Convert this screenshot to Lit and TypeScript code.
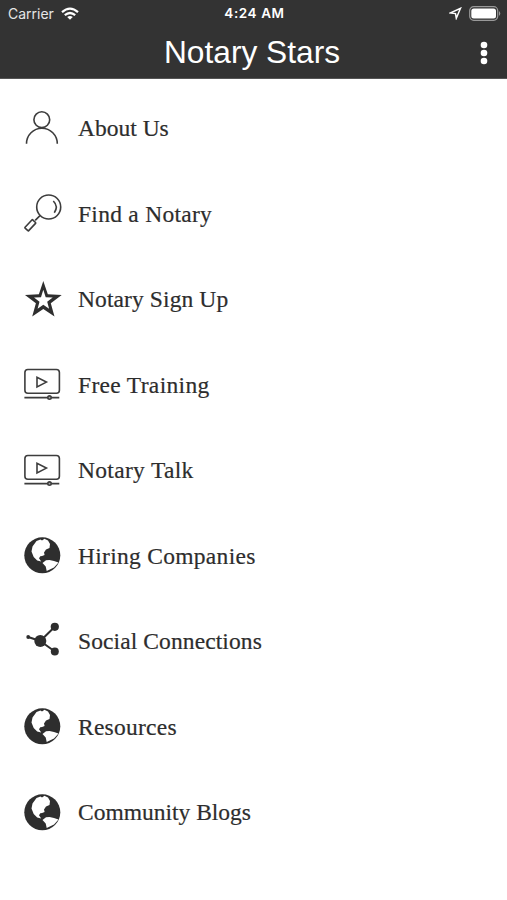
import { LitElement, html, svg, css } from "lit";
import { customElement } from "lit/decorators.js";
import { styleMap } from "lit/directives/style-map.js";

const person = { y: -2.5, art: svg`<g class="line"><circle cx="26.8" cy="19.2" r="7.9"/><path d="M11.5 43.3a15.4 15.6 0 0 1 30.8 0"/></g>` };
const search = { y: -2, art: svg`<g class="line"><circle cx="33.7" cy="22" r="12"/><path d="M38.3 16q5.4 5.4 1 11.7M25 30.6l-4.8 4.8"/><rect x="-5.6" y="-2.5" width="11.2" height="5" rx=".6" transform="translate(15.3 40.3) rotate(-47)"/></g>` };
const star = { y: -1.5, art: svg`<path class="solid" fill-rule="evenodd" d="M28.3 10.5l4.5 13.3 13.9.6-10.900 8.400 3.700 13.300-11.200-7.500-11.100 7.500 3.700-13.300-10.900-8.400 13.900-.6zM28.300 19.300l-2.300 7.400-7 .3 5.500 4.300-1.900 6.900 5.700-3.900 5.800 3.900-1.900-6.900 5.500-4.300-7-.3z"/>` };
const video = { y: -1, art: svg`<g class="line"><rect x="9.9" y="14.5" width="34.5" height="23.8" rx="3"/><path d="M22 22.3v9.600l9.400-4.800zM9.400 42.600h34.900"/><circle class="knob" cx="34.5" cy="42.6" r="1.7"/></g>` };
const globe = { y: 0, art: svg`<circle class="solid" cx="27.3" cy="30.3" r="18"/><path class="land" d="M16.500 26.500l1-5 4-5.500 4-1.500 1.500 1 2.500-1.800 3.500 1.800 2 3.500-.5 4-3.500 1.500-2 3 .6 2.500-2.500 1-1.800.3-1.300 2 2.200 3.200-4-1-3.500-3.500zM27.500 38l3.500-2.800 3.500-.2 4.500 1 4.500 1.600-4.500 5-7.300 3.400-1-4.400z"/>` };
const share = { y: 0.5, art: svg`<g class="solid"><circle cx="25.3" cy="30.5" r="6"/><circle cx="39.8" cy="16.3" r="4.1"/><circle cx="39.8" cy="41" r="4"/><circle cx="13.2" cy="26.5" r="1.9"/></g><path class="bond" d="M13.2 26.500l12.100 4 14.500-14.200M25.300 30.500l14.500 10.500"/>` };

const items = [
  { label: "About Us", icon: person, tracking: 0 },
  { label: "Find a Notary", icon: search, tracking: 0.27 },
  { label: "Notary Sign Up", icon: star, tracking: 0.1 },
  { label: "Free Training", icon: video, tracking: 0.33 },
  { label: "Notary Talk", icon: video, tracking: 0.32 },
  { label: "Hiring Companies", icon: globe, tracking: 0.29 },
  { label: "Social Connections", icon: share, tracking: 0.1 },
  { label: "Resources", icon: globe, tracking: 0.25 },
  { label: "Community Blogs", icon: globe, tracking: 0 },
];

@customElement("app-root")
export class AppRoot extends LitElement {
  static styles = css`
    :host { display: block; height: 900px; background: #fff; color: #2d2d2d; overflow: hidden; }
    header { box-sizing: border-box; height: 79px; background: #333; border-bottom: 1px solid #555; color: #fff; }
    .status { display: grid; grid-template-columns: 1fr auto 1fr; align-items: center; height: 27px; padding: 0 6px 0 8px; font: 14px/27px Inter, sans-serif; }
    .side { display: flex; align-items: center; gap: 7px; color: #e6e6e6; }
    .end { justify-content: flex-end; }
    .time { font-size: 13.5px; font-weight: 600; letter-spacing: .6px; }
    .bar { display: grid; grid-template-columns: 1fr auto 1fr; align-items: center; height: 51px; padding: 0 17px 0 14px; }
    h1 { grid-column: 2; margin: 0; font: 400 31.7px/50px "Liberation Sans", Arial, sans-serif; padding-bottom: 1px; }
    .more { justify-self: end; }
    svg { display: block; flex: none; }
    nav { padding-top: 5.75px; }
    .row { display: flex; align-items: center; gap: 3px; height: 85.5px; padding-left: 15px; }
    .label { padding-top: 1px; font: 23.5px/30px Georgia, "Liberation Serif", serif; white-space: nowrap; -webkit-text-stroke: .2px #2d2d2d; }
    .line { fill: none; stroke: #3d3d3d; stroke-width: 1.6; }
    .knob { fill: #aaa; }
    .solid { fill: #2e2e2e; }
    .land { fill: #fff; }
    .bond { fill: none; stroke: #2e2e2e; stroke-width: 2; }
  `;

  render() {
    return html`
      <header>
        <div class="status">
          <div class="side"><span>Carrier</span>
            <svg width="18" height="14" viewBox="0 0 18 14" fill="none" stroke="#fff" stroke-width="2.2"><path d="M1 5.2q8-7 16 0M3.8 8.2q5.2-4.4 10.4 0"/><path d="M9 12.7L6.2 10q2.8-2.2 5.6 0z" fill="#fff" stroke="none"/></svg>
          </div>
          <div class="time">4:24 AM</div>
          <div class="side end">
            <svg width="13" height="13" viewBox="0 0 13 13" fill="none" stroke="#fff" stroke-width="1.5"><path d="M11.5 1.3L7.3 11.2 6.5 6.6 1.5 5.9z"/></svg>
            <svg width="32" height="15" viewBox="0 0 32 15"><rect x=".7" y=".7" width="28" height="13.6" rx="4" fill="none" stroke="#999" stroke-width="1.2"/><rect x="2.3" y="2.4" width="24.7" height="10.2" rx="2.5" fill="#fff"/><path d="M30 5q2.5 2.5 0 5z" fill="#999"/></svg>
          </div>
        </div>
        <div class="bar">
          <h1>Notary Stars</h1>
          <svg class="more" width="12" height="26" viewBox="0 0 12 26" fill="#fff"><circle cx="6" cy="5" r="3.3"/><circle cx="6" cy="13" r="3.3"/><circle cx="6" cy="21" r="3.3"/></svg>
        </div>
      </header>
      <nav>
        ${items.map(({ label, icon, tracking }) => html`
          <div class="row">
            <svg width="60" height="60" viewBox="0 ${icon.y} 60 60">${icon.art}</svg>
            <span class="label" style=${styleMap({ letterSpacing: `${tracking}px` })}>${label}</span>
          </div>`)}
      </nav>
    `;
  }
}
